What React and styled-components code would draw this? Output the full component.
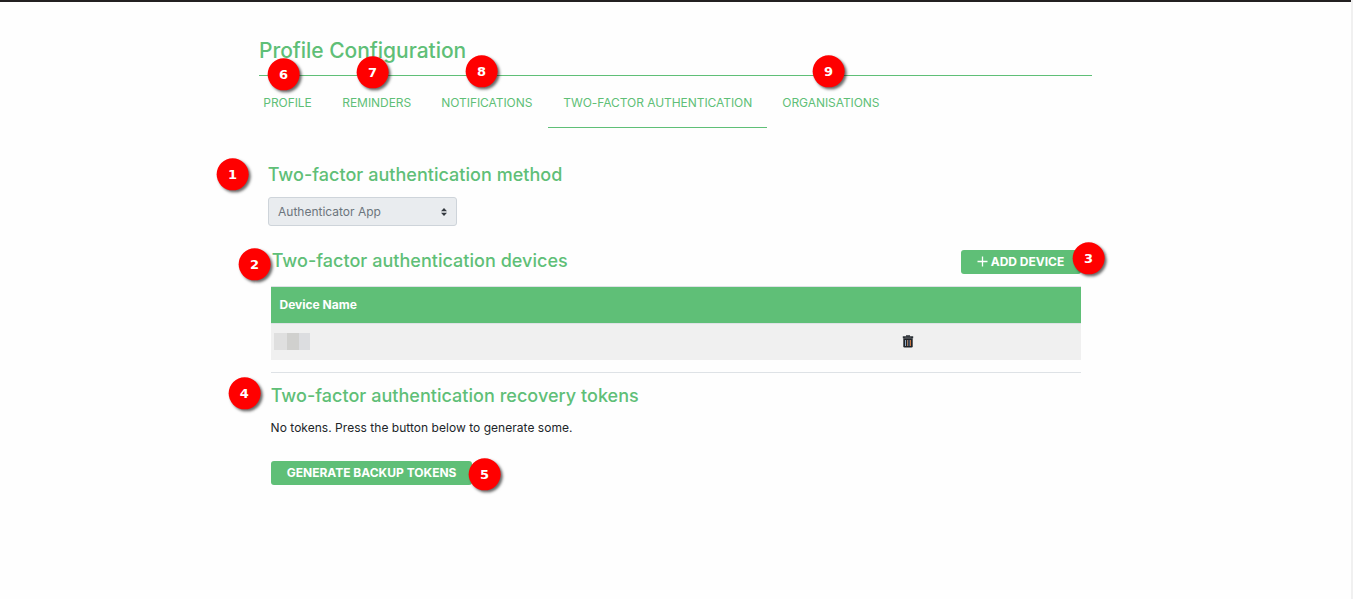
import React from "react";
import styled, { createGlobalStyle } from "styled-components";

const GREEN = "#5fbf77";

const Global = createGlobalStyle`
  * { box-sizing: border-box; }
  html, body { margin: 0; background: #fefefe; overflow: hidden; }
  body { font-family: Inter, "Liberation Sans", sans-serif; font-size: 12px; color: #212529; }
`;

const Frame = styled.div`
  position: relative;
  height: 599px;
  border-right: 2px solid #f0f0f0;
  overflow: hidden;
`;

const Page = styled.div`
  height: 599px;
  border-top: 2px solid #232021;
`;

const Container = styled.main`
  width: 833px;
  margin-left: 259px;
`;

const Title = styled.h1`
  margin: 0;
  height: 74px;
  padding-top: 35px;
  border-bottom: 1px solid ${GREEN};
  color: ${GREEN};
  font-size: 21px;
  font-weight: 500;
  line-height: 28px;
  letter-spacing: -0.03px;
  white-space: nowrap;
`;

const Tabs = styled.nav`
  display: flex;
  margin-left: -11px;
  height: 52px;
`;

const Tab = styled.a`
  width: ${(p) => p.$width}px;
  padding: 17px 0 0 15.3px;
  border-bottom: 1px solid ${(p) => (p.$active ? GREEN : "transparent")};
  color: ${GREEN};
  line-height: 20px;
  letter-spacing: -0.06px;
  white-space: nowrap;
`;

const Section = styled.section`
  width: 810px;
  margin-left: 12px;
`;

const Heading = styled.h2`
  margin: 0;
  color: ${GREEN};
  font-size: 18px;
  font-weight: 500;
  line-height: 24px;
  letter-spacing: 0.03px;
  text-indent: -0.3px;
  white-space: nowrap;
`;

const TokensHeading = styled(Heading)`
  margin-top: 11px;
`;

const Method = styled(Section)`
  margin-left: 9px;
  padding-top: 35px;
`;

const Select = styled.div`
  display: flex;
  align-items: center;
  justify-content: space-between;
  width: 189px;
  height: 29px;
  margin-top: 10px;
  padding: 0 9px;
  border: 1px solid #ced4da;
  border-radius: 3px;
  background: #e9ecef;
  color: #6c757d;
`;

const DeviceBar = styled.div`
  display: flex;
  justify-content: space-between;
  align-items: flex-start;
  height: 36px;
  margin-top: 24px;
  padding-left: 1px;
  ${Heading} { line-height: 22px; }
`;

const Button = styled.button`
  display: flex;
  align-items: center;
  width: ${(p) => p.$width}px;
  height: 24px;
  padding: 0 0 2px 15.7px;
  border: 0;
  border-radius: 3px;
  background: ${GREEN};
  color: #fff;
  font: 650 12px Inter, sans-serif;
  white-space: nowrap;
  svg { margin-right: 3px; }
`;

const Table = styled.div`
  border-bottom: 1px solid #dee2e6;
  height: 87px;
`;

const HeadRow = styled.div`
  height: 38px;
  padding-left: 8.5px;
  border-top: 1px solid #dee2e6;
  border-bottom: 1px solid #dee2e6;
  background: ${GREEN};
  background-clip: padding-box;
  color: #fff;
  font-weight: 650;
  line-height: 35px;
`;

const Row = styled.div`
  display: flex;
  align-items: center;
  justify-content: space-between;
  height: 36px;
  padding: 0 167px 1px 3px;
  background: #f0f0f0;
`;

const Redacted = styled.div`
  width: 36px;
  height: 17px;
  background: linear-gradient(90deg, #dfdfdf 0 13px, #d0d0ce 13px 25px, #dcdde0 25px);
`;

const Note = styled.p`
  margin: 11px 0 24px -0.4px;
  line-height: 18px;
  letter-spacing: 0.03px;
`;

const Badge = styled.span`
  position: absolute;
  z-index: 0;
  left: ${(p) => p.$x}px;
  top: ${(p) => p.$y}px;
  width: 32px;
  height: 32px;
  color: #fff;
  font: bold 13px/33px "DejaVu Sans", sans-serif;
  text-align: center;
  text-indent: -0.8px;

  &::before {
    content: "";
    position: absolute;
    z-index: -1;
    inset: 0;
    border-radius: 50%;
    background: #f00;
    box-shadow: 2px 2px 3px rgba(0, 0, 0, 0.6);
    transform: translate(-0.35px, 0.35px);
  }
`;

const TABS = [
  ["PROFILE", 79],
  ["REMINDERS", 99],
  ["NOTIFICATIONS", 122],
  ["TWO-FACTOR AUTHENTICATION", 219],
  ["ORGANISATIONS", 128],
];

const BADGES = [
  [217, 158], [239, 248], [1073, 242], [228.6, 377], [469, 458],
  [268, 58], [357, 56], [466, 55], [813, 55],
];

const Arrows = () => (
  <svg width="6" height="8" viewBox="0 0 6 8">
    <path d="M0 3.3 3 0l3 3.3zM0 4.7h6L3 8z" fill="#343a40" />
  </svg>
);

const Plus = () => (
  <svg width="11" height="11" viewBox="0 0 11 11">
    <path d="M5.5 .5v10M.5 5.5h10" stroke="#fff" strokeWidth="1.3" />
  </svg>
);

const Trash = () => (
  <svg width="12" height="13" viewBox="0 0 12 13">
    <path d="M4 0.3h4v1h3.2v2H.8v-2H4z" fill="#2b3036" />
    <path d="M3 2.2h6" stroke="#6b6f74" strokeWidth=".6" />
    <path d="M1.3 3.3h9.4v8q0 1.3-1.2 1.3h-7q-1.2 0-1.2-1.3z" fill="#202328" />
    <path d="M3.5 5v6" stroke="#8fa9c4" />
    <path d="M5.5 5v6" stroke="#a0795f" />
    <path d="M7.1 5v6" stroke="#6f86a5" strokeWidth=".8" />
    <path d="M8.5 5v6" stroke="#c47440" />
  </svg>
);

export default function App() {
  return (
    <Frame>
      <Global />
      <Page>
        <Container>
          <Title>Profile Configuration</Title>
          <Tabs>
            {TABS.map(([label, width], i) => (
              <Tab key={label} $width={width} $active={i === 3}>{label}</Tab>
            ))}
          </Tabs>
          <Method>
            <Heading>Two-factor authentication method</Heading>
            <Select>Authenticator App<Arrows /></Select>
          </Method>
          <Section>
            <DeviceBar>
              <Heading>Two-factor authentication devices</Heading>
              <Button $width={120}><Plus />ADD DEVICE</Button>
            </DeviceBar>
            <Table>
              <HeadRow>Device Name</HeadRow>
              <Row><Redacted /><Trash /></Row>
            </Table>
            <TokensHeading>Two-factor authentication recovery tokens</TokensHeading>
            <Note>No tokens. Press the button below to generate some.</Note>
            <Button $width={201}>GENERATE BACKUP TOKENS</Button>
          </Section>
        </Container>
      </Page>
      {BADGES.map(([x, y], i) => (
        <Badge key={i} $x={x} $y={y}>{i + 1}</Badge>
      ))}
    </Frame>
  );
}
